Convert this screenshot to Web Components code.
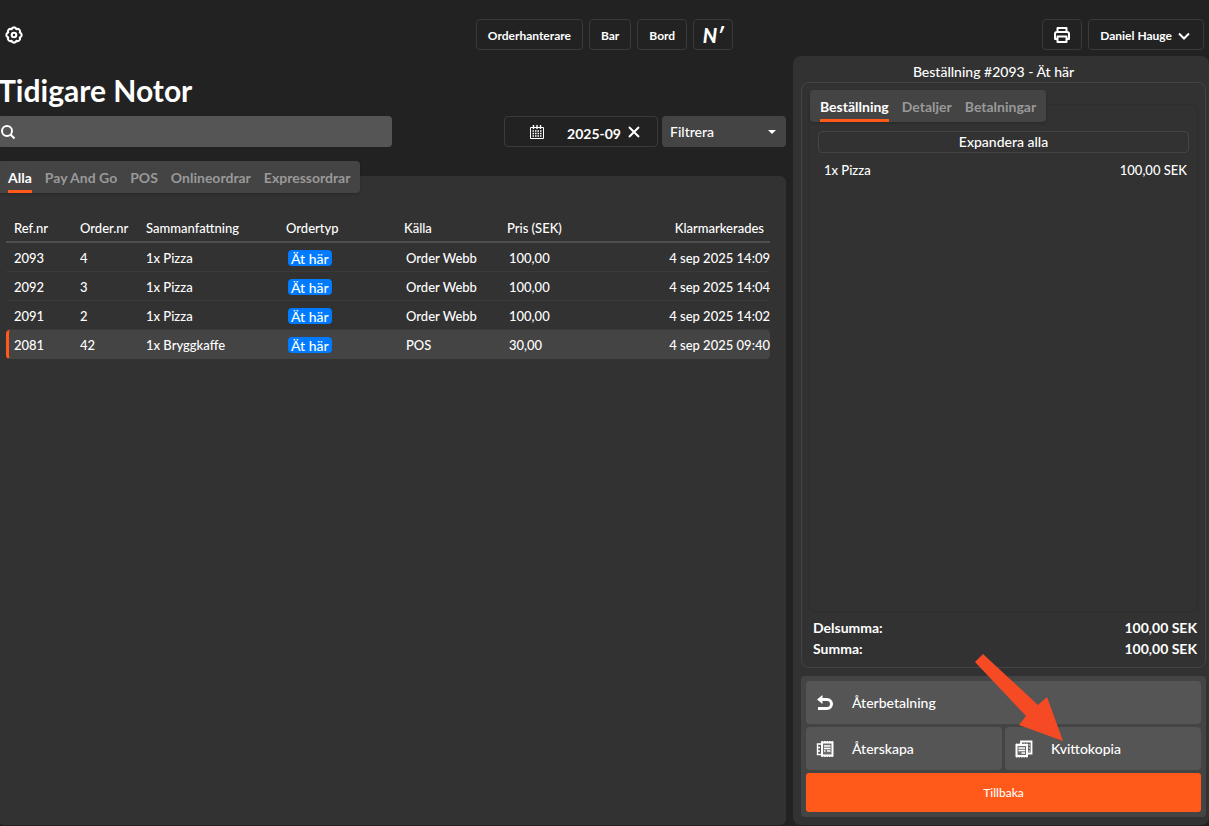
<!DOCTYPE html>
<html lang="sv">
<head>
<meta charset="utf-8">
<meta name="viewport" content="width=device-width, initial-scale=1">
<title>Tidigare Notor</title>
<style>
  html, body{
    height: 100%;
    margin: 0;
  }

  body{
    background-color: #222;
    color: #fff;
    font-family: Lato, "Liberation Sans", sans-serif;
    font-size: 14px;
    font-weight: 500;
    line-height: 20px;
    overflow: hidden;
  }
</style>
</head>
<body>
<pos-app></pos-app>

<script>
const icons = {
  gear: '<svg viewBox="0 0 24 24" fill="none" stroke="currentColor" stroke-width="2.8" stroke-linejoin="round"><path d="M8.8 4.3a3.3 3.3 0 0 1 6.4 0 3.3 3.3 0 0 1 4.5 4.5 3.3 3.3 0 0 1 0 6.400 3.300 3.300 0 0 1-4.500 4.500 3.300 3.300 0 0 1-6.400 0 3.300 3.300 0 0 1-4.500-4.500 3.300 3.300 0 0 1 0-6.400 3.300 3.300 0 0 1 4.500-4.500z"/><circle cx="12" cy="12" r="3"/></svg>',
  search: '<svg viewBox="0 0 16 16" fill="none" stroke="currentColor" stroke-width="2"><circle cx="7" cy="7" r="5"/><path d="M10.5 10.5 14.500 14.500"/></svg>',
  calendar: '<svg viewBox="0 0 16 16" fill="none" stroke="currentColor"><path d="M1.5 3.5h13v11h-13z"/><path d="M4.500 1v4M8 1v4M11.500 1v4" stroke-width="1.4"/><path d="M3.500 7h9M3.500 9.500h9M3.500 12h9" stroke-width="1.7" stroke-dasharray="1.5 1"/></svg>',
  close: '<svg viewBox="0 0 16 16" fill="none" stroke="currentColor" stroke-width="2"><path d="m3 3 10 10M13 3 3 13"/></svg>',
  printer: '<svg viewBox="0 0 18 18" fill="none" stroke="currentColor" stroke-width="2" stroke-linejoin="round"><path d="M4.500 6V2h9v4M4.500 13H2V8q0-2 2-2h10q2 0 2 2v5h-2.500"/><path d="M4.500 10.500h9V16h-9z"/></svg>',
  chevron: '<svg viewBox="0 0 16 16" fill="none" stroke="currentColor" stroke-width="2"><path d="m3 5.500 5 5 5-5"/></svg>',
  undo: '<svg viewBox="0 0 18 18"><path d="M5 5.500h6a4.500 4.500 0 0 1 0 9H2" fill="none" stroke="currentColor" stroke-width="3"/><path d="M1 5.500 6.500 1v9z" fill="currentColor"/></svg>',
  recreate: '<svg viewBox="0 0 18 18" fill="none" stroke="currentColor"><path d="M5 4H1.500v10.500H5M1 7.500h3M1 11h3" stroke-width="1.4"/><path d="M6 2.500h10.500v13H6z" stroke-width="2" fill="rgba(255, 255, 255, .15)"/><path d="M5.500 1.500h11.500M5.500 16.500h11.500" stroke-dasharray="1.5 1"/><path d="M8 6h6.500M8 8.500h6.500M11 11h3.500M8 11h1.500" stroke-width="1.6"/></svg>',
  copy: '<svg viewBox="0 0 18 18" fill="none" stroke="currentColor"><path d="M6 4V1.500h10.500v12H13" stroke-width="1.8"/><path d="M13.500 5h1.500M13.500 8h1.500M13.500 11h1.500"/><path d="M1.500 5h10.500v11H1.500z" stroke-width="2" fill="rgba(255, 255, 255, .15)"/><path d="M1 4h11.500M1 17h11.500" stroke-dasharray="1.5 1"/><path d="M3.500 8h6.500M3.500 10.500h6.500M6.500 13h3.500" stroke-width="1.6"/></svg>',
};

const orders = [
  { ref: '2093', nr: '4', summary: '1x Pizza', type: 'Ät här', source: 'Order Webb', price: '100,00', done: '4 sep 2025 14:09' },
  { ref: '2092', nr: '3', summary: '1x Pizza', type: 'Ät här', source: 'Order Webb', price: '100,00', done: '4 sep 2025 14:04' },
  { ref: '2091', nr: '2', summary: '1x Pizza', type: 'Ät här', source: 'Order Webb', price: '100,00', done: '4 sep 2025 14:02' },
  { ref: '2081', nr: '42', summary: '1x Bryggkaffe', type: 'Ät här', source: 'POS', price: '30,00', done: '4 sep 2025 09:40', selected: true },
];

// Shared base: every element renders its markup once into an open root
class BaseElement extends HTMLElement {
  constructor() {
    super();
    this.attachShadow({ mode: 'open' });
  }

  connectedCallback() {
    this.shadowRoot.innerHTML = this.render();
  }
}

class AppIcon extends BaseElement {
  render() {
    return `
<style>
  :host{
    display: block;
    flex: none;
    width: 16px;
    height: 16px;
  }

  svg{
    display: block;
    width: 100%;
    height: 100%;
  }
</style>
${icons[this.getAttribute('name')]}`;
  }
}

class NavButton extends BaseElement {
  render() {
    const label = this.getAttribute('label');
    return `
<style>
  :host{
    display: block;
  }

  button{
    display: flex;
    align-items: center;
    justify-content: center;
    gap: 4px;
    box-sizing: border-box;
    min-width: 40px;
    height: 31px;
    padding: 2px 11px 0;
    border: 1px solid #3a3a3a;
    border-radius: 4px;
    background: none;
    color: inherit;
    font: bold 12px/16px Lato, "Liberation Sans", sans-serif;
    white-space: nowrap;
  }

  :host([compact]) button{
    padding: 0 8px;
  }
</style>
<button type="button"${label ? ` aria-label="${label}"` : ''}><slot></slot></button>`;
  }
}

class AppHeader extends BaseElement {
  render() {
    return `
<style>
  :host{
    display: grid;
    grid-template-columns: 1fr auto 1fr;
    align-items: center;
    box-sizing: border-box;
    height: 56px;
    padding: 13px 5px 0;
  }

  nav, .user{
    display: flex;
    gap: 6px;
  }

  .user{
    justify-content: flex-end;
  }

  .settings{
    justify-self: start;
    padding: 0;
    border: 0;
    background: none;
    color: inherit;
  }

  .settings app-icon, .printer{
    width: 18px;
    height: 18px;
  }

  .brand{
    font-size: 20px;
    font-weight: 900;
    font-style: italic;
  }
</style>
<button class="settings" type="button" aria-label="Inställningar"><app-icon name="gear"></app-icon></button>
<nav>
  <nav-button>Orderhanterare</nav-button>
  <nav-button>Bar</nav-button>
  <nav-button>Bord</nav-button>
  <nav-button compact><span class="brand">N′</span></nav-button>
</nav>
<div class="user">
  <nav-button compact label="Skriv ut"><app-icon class="printer" name="printer"></app-icon></nav-button>
  <nav-button>Daniel Hauge <app-icon name="chevron"></app-icon></nav-button>
</div>`;
  }
}

class TabBar extends BaseElement {
  render() {
    const tabs = this.getAttribute('tabs').split('|');
    return `
<style>
  :host{
    display: flex;
    width: fit-content;
    box-sizing: border-box;
    height: 32px;
    gap: 13px;
    padding: 0 10px;
    border-radius: 4px;
    background-color: #444;
    box-shadow: 0 1px 3px rgba(0, 0, 0, .2);
  }

  button{
    padding: 5px 0 0;
    border: 0;
    border-bottom: 3px solid transparent;
    background: none;
    color: #999;
    font: bold 14px/20px Lato, "Liberation Sans", sans-serif;
    white-space: nowrap;
  }

  button[aria-selected="true"]{
    border-color: #ff5a1a;
    color: #fff;
  }
</style>
${tabs.map((tab, i) => `<button type="button" role="tab" aria-selected="${i === 0}">${tab}</button>`).join('')}`;
  }

  connectedCallback() {
    super.connectedCallback();
    this.setAttribute('role', 'tablist');
    this.shadowRoot.addEventListener('click', (e) => {
      const tab = e.target.closest('button');
      if (!tab) { return; }
      this.shadowRoot.querySelectorAll('button').forEach((b) => b.setAttribute('aria-selected', b === tab));
    });
  }
}

class OrderFilters extends BaseElement {
  render() {
    return `
<style>
  :host{
    display: flex;
    gap: 4px;
    height: 31px;
  }

  .search, .date, .filter{
    display: flex;
    align-items: center;
    box-sizing: border-box;
    border-radius: 4px;
  }

  .search{
    width: 50%;
    margin-right: auto;
    padding: 0 2px;
    background-color: #555;
  }

  input{
    min-width: 0;
    padding: 0;
    border: 0;
    outline: 0;
    background: none;
    color: inherit;
    font: inherit;
  }

  .search input{
    flex: 1;
    padding-left: 8px;
  }

  .date{
    width: 154px;
    padding: 0 15px 0 24px;
    border: 1px solid #3a3a3a;
  }

  .date input{
    flex: 1;
    height: 27px;
    padding-top: 3px;
    text-align: right;
    font-weight: bold;
  }

  .date button{
    margin-left: 5px;
    padding: 0;
    border: 0;
    background: none;
    color: inherit;
  }

  .filter{
    position: relative;
    width: 124px;
    background-color: #444;
  }

  .filter::after{
    content: "";
    position: absolute;
    right: 10px;
    border: 4px solid transparent;
    border-top-color: #fff;
    border-bottom-width: 0;
    pointer-events: none;
  }

  select{
    appearance: none;
    width: 100%;
    height: 100%;
    padding: 0 8px;
    border: 0;
    background: none;
    color: inherit;
    font: inherit;
  }
</style>
<label class="search"><app-icon name="search"></app-icon><input type="text" aria-label="Sök"></label>
<div class="date">
  <app-icon name="calendar"></app-icon>
  <input type="text" value="2025-09" aria-label="Månad">
  <button type="button" aria-label="Rensa"><app-icon name="close"></app-icon></button>
</div>
<div class="filter"><select aria-label="Filtrera"><option>Filtrera</option></select></div>`;
  }
}

class OrderTable extends BaseElement {
  render() {
    return `
<style>
  :host{
    display: block;
  }

  table{
    width: 100%;
    table-layout: fixed;
    border-collapse: separate;
    border-spacing: 0;
    font-size: 13px;
  }

  th, td{
    box-sizing: border-box;
    height: 29px;
    padding: 1px 0 0 8px;
    font-weight: 500;
    text-align: left;
    white-space: nowrap;
  }

  th{
    border-bottom: 2px solid #4f4f4f;
  }

  td{
    border-bottom: 1px solid #3a3a3a;
  }

  .short{
    width: 66px;
  }

  .summary{
    width: 140px;
  }

  .type{
    width: 118px;
  }

  .source{
    width: 103px;
  }

  th:last-child{
    padding-right: 6px;
  }

  th:last-child, td:last-child{
    text-align: right;
  }

  td:nth-child(n+4):nth-child(-n+6){
    padding-left: 10px;
  }

  tr.selected td{
    border-color: #444;
    background-color: #444;
  }

  tr.selected td:first-child{
    padding-left: 5px;
    border-left: 3px solid #ff5a1a;
    border-radius: 4px 0 0 4px;
  }

  tr.selected td:last-child{
    border-radius: 0 4px 4px 0;
  }

  .badge{
    display: block;
    width: fit-content;
    height: 16px;
    padding: 0 3px;
    border-radius: 4px;
    background-color: #007bff;
    font-size: 14px;
    line-height: 18px;
  }
</style>
<table>
  <thead>
    <tr>
      <th class="short">Ref.nr</th>
      <th class="short">Order.nr</th>
      <th class="summary">Sammanfattning</th>
      <th class="type">Ordertyp</th>
      <th class="source">Källa</th>
      <th>Pris (SEK)</th>
      <th>Klarmarkerades</th>
    </tr>
  </thead>
  <tbody>
    ${orders.map((order) => this.renderRow(order)).join('')}
  </tbody>
</table>`;
  }

  renderRow(order) {
    return `
<tr${order.selected ? ' class="selected"' : ''}>
  <td>${order.ref}</td>
  <td>${order.nr}</td>
  <td>${order.summary}</td>
  <td><span class="badge">${order.type}</span></td>
  <td>${order.source}</td>
  <td>${order.price}</td>
  <td>${order.done}</td>
</tr>`;
  }
}

class ActionButton extends BaseElement {
  render() {
    return `
<style>
  :host{
    display: block;
  }

  button{
    display: flex;
    align-items: center;
    gap: 18px;
    width: 100%;
    height: 43px;
    padding: 0 10px;
    border: 0;
    border-radius: 4px;
    background-color: #555;
    color: inherit;
    font: inherit;
  }

  app-icon{
    width: 18px;
    height: 18px;
  }

  :host([primary]) button{
    justify-content: center;
    height: 39px;
    border-radius: 3px;
    background-color: #ff5a1a;
    font-size: 12px;
  }
</style>
<button type="button">${this.hasAttribute('icon') ? `<app-icon name="${this.getAttribute('icon')}"></app-icon>` : ''}<slot></slot></button>`;
  }
}

class OrderPanel extends BaseElement {
  render() {
    return `
<style>
  :host{
    display: flex;
    flex-direction: column;
    box-sizing: border-box;
    padding: 6px 3px 8px 8px;
    border-radius: 8px;
    background-color: #323232;
  }

  h2{
    margin: 0;
    padding-right: 20px;
    font-size: 14px;
    font-weight: 500;
    line-height: 20px;
    text-align: center;
  }

  .order{
    display: flex;
    flex-direction: column;
    flex: auto;
    padding: 7px 8px 8px;
    border: 1px solid #444;
    border-radius: 8px;
  }

  tab-bar{
    z-index: 1;
  }

  .lines{
    flex: auto;
    margin-top: -17px;
    padding: 26px 8px 0;
    border-radius: 6px;
    box-shadow: 0 0 2px rgba(0, 0, 0, .25);
  }

  .expand{
    display: block;
    width: 100%;
    height: 22px;
    padding: 0;
    border: 1px solid #444;
    border-radius: 4px;
    background: none;
    color: inherit;
    font: inherit;
  }

  .line{
    display: flex;
    justify-content: space-between;
    padding: 7px 2px 0 6px;
    font-size: 13px;
  }

  dl{
    margin: 0;
    padding: 6px 0 0 3px;
    font-weight: bold;
  }

  dl div{
    display: flex;
    justify-content: space-between;
    line-height: 21px;
  }

  dd{
    margin: 0;
  }

  .actions{
    position: relative;
    display: grid;
    grid-template-columns: 1fr 1fr;
    gap: 3px;
    margin-top: 8px;
    padding: 5px;
    border-radius: 4px;
    background-color: #444;
  }

  .wide{
    grid-column: span 2;
  }

  .pointer{
    position: absolute;
    top: -23px;
    right: 143px;
    width: 88px;
    height: 88px;
    pointer-events: none;
  }
</style>
<h2>Beställning #2093 - Ät här</h2>
<section class="order">
  <tab-bar tabs="Beställning|Detaljer|Betalningar"></tab-bar>
  <div class="lines">
    <button class="expand" type="button">Expandera alla</button>
    <div class="line"><span>1x Pizza</span><span>100,00 SEK</span></div>
  </div>
  <dl>
    <div><dt>Delsumma:</dt><dd>100,00 SEK</dd></div>
    <div><dt>Summa:</dt><dd>100,00 SEK</dd></div>
  </dl>
</section>
<div class="actions">
  <action-button class="wide" icon="undo">Återbetalning</action-button>
  <action-button icon="recreate">Återskapa</action-button>
  <action-button icon="copy">Kvittokopia</action-button>
  <action-button class="wide" primary>Tillbaka</action-button>
  <svg class="pointer" viewBox="0 0 88 88"><path d="M0 9 8 1l55 51 9-8 16 44-44-16 7-9z" fill="#f54a24"/></svg>
</div>`;
  }
}

class PosApp extends BaseElement {
  render() {
    return `
<style>
  :host{
    display: flex;
    flex-direction: column;
    box-sizing: border-box;
    height: 100%;
    padding-bottom: 1px;
  }

  main{
    display: grid;
    grid-template-columns: minmax(0, 1fr) 416px;
    gap: 7px;
    flex: auto;
    min-height: 0;
  }

  /* the left side runs slightly past the window edge */
  .history{
    display: flex;
    flex-direction: column;
    margin-left: -2px;
  }

  h1{
    margin: 0;
    padding: 14px 0 6px;
    font-size: 30px;
    line-height: 40px;
  }

  order-filters{
    margin-bottom: 14px;
  }

  tab-bar{
    z-index: 1;
  }

  .list{
    flex: auto;
    margin-top: -17px;
    padding: 38px 16px 0 8px;
    border-radius: 6px;
    background-color: #323232;
  }
</style>
<app-header></app-header>
<main>
  <section class="history">
    <h1>Tidigare Notor</h1>
    <order-filters></order-filters>
    <tab-bar tabs="Alla|Pay And Go|POS|Onlineordrar|Expressordrar"></tab-bar>
    <div class="list"><order-table></order-table></div>
  </section>
  <order-panel></order-panel>
</main>`;
  }
}

customElements.define('app-icon', AppIcon);
customElements.define('nav-button', NavButton);
customElements.define('app-header', AppHeader);
customElements.define('tab-bar', TabBar);
customElements.define('order-filters', OrderFilters);
customElements.define('order-table', OrderTable);
customElements.define('action-button', ActionButton);
customElements.define('order-panel', OrderPanel);
customElements.define('pos-app', PosApp);
</script>
</body>
</html>
